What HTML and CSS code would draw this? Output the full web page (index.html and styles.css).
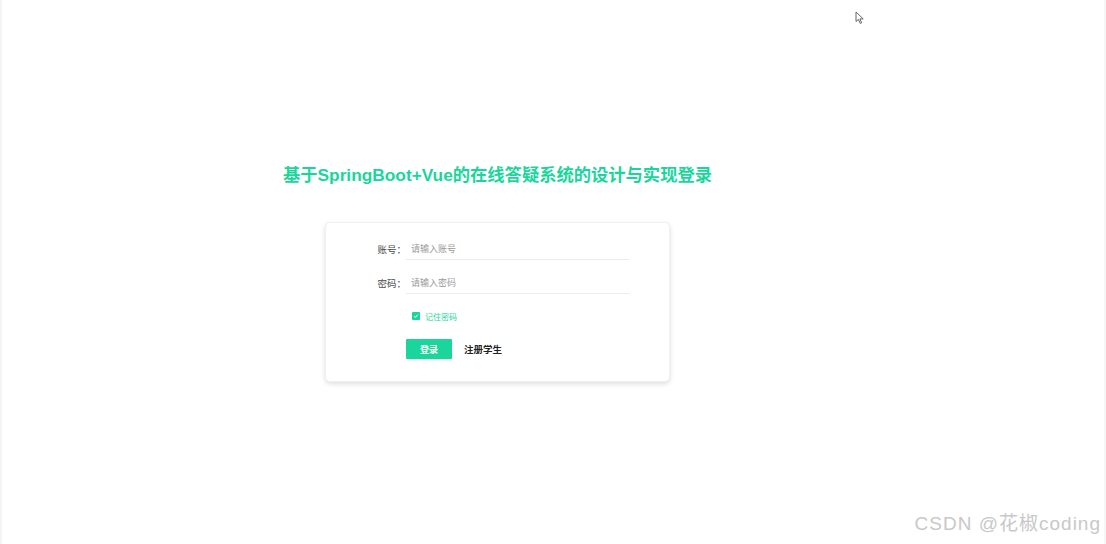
FILE: index.html
```html
<!DOCTYPE html>
<html>
<head>
    <meta charset="utf-8">
    <title>登录</title>
    <link rel="stylesheet" href="styles.css">
</head>
<body>
    <div class="page">
        <h1 class="title">基于SpringBoot+Vue的在线答疑系统的设计与实现登录</h1>

        <div class="login-card">
            <div class="form-item">
                <label class="form-label" for="username">账号：</label>
                <input class="form-input" type="text" id="username" placeholder="请输入账号">
            </div>

            <div class="form-item">
                <label class="form-label" for="password">密码：</label>
                <input class="form-input" type="password" id="password" placeholder="请输入密码">
            </div>

            <div class="form-item remember-row">
                <label class="remember">
                    <span class="check-box">
                        <svg width="6" height="6" viewBox="0 0 10 10"><path d="M2 5.2 L4.2 7.3 L8 2.8" fill="none" stroke="#fff" stroke-width="1.6"/></svg>
                    </span>
                    <span>记住密码</span>
                </label>
            </div>

            <div class="form-item button-row">
                <button class="login-button">登录</button>
                <a class="register-link">注册学生</a>
            </div>
        </div>
    </div>

    <svg class="cursor" width="10" height="14" viewBox="0 0 10 14">
        <path d="M1 1 L1 10.5 L3.4 8.4 L5.2 12.4 L6.6 11.8 L4.9 7.9 L8.2 7.9 Z" fill="#fff" stroke="#555" stroke-width="0.9"/>
    </svg>

    <div class="watermark">CSDN @花椒coding</div>
</body>
</html>
```

FILE: styles.css
```css
body {
    margin: 0;
    height: 544px;
    background: #fff;
    font-family: "Liberation Sans", "Noto Sans CJK SC", sans-serif;
    border-left: 2px solid #f4f4f4;
    border-right: 2px solid #f6f6f6;
    box-sizing: border-box;
    overflow: hidden;
}
.page {
    width: 991px;
    display: flex;
    flex-direction: column;
    align-items: center;
    padding-top: 163px;
}
.title {
    margin: 0;
    font-size: 17.3px;
    line-height: 24px;
    font-weight: bold;
    color: #1bd69c;
}
.login-card {
    margin-top: 35px;
    width: 345px;
    box-sizing: border-box;
    padding: 15px 40px 22px 0;
    background: #fff;
    border: 1px solid #f0f0f0;
    border-radius: 5px;
    box-shadow: 0 2px 5px rgba(0, 0, 0, 0.13);
}
.form-item {
    display: flex;
    align-items: center;
}
.form-item + .form-item {
    margin-top: 12px;
}
.form-label {
    width: 80px;
    box-sizing: border-box;
    text-align: right;
    font-size: 9.5px;
    color: #4a4a4a;
}
.form-input {
    flex: 1;
    height: 22px;
    box-sizing: border-box;
    padding: 0 0 0 5px;
    border: none;
    border-bottom: 1px solid #ececec;
    outline: none;
    font-size: 9px;
    font-family: inherit;
    color: #606266;
}
.form-input::placeholder {
    color: #9a9a9a;
}
.remember-row {
    margin-top: 15px !important;
    padding-left: 86px;
    height: 14px;
}
.remember {
    display: flex;
    align-items: center;
    gap: 5px;
    font-size: 8px;
    color: #1bd69c;
}
.check-box {
    width: 8px;
    height: 8px;
    border-radius: 1px;
    background: #1bd69c;
    display: flex;
    align-items: center;
    justify-content: center;
}
.button-row {
    margin-top: 16px !important;
    padding-left: 80px;
}
.login-button {
    width: 46px;
    height: 20px;
    padding: 0;
    border: none;
    border-radius: 1px;
    background: #1bd69c;
    color: #fff;
    font-size: 9px;
    font-weight: bold;
    font-family: inherit;
    cursor: pointer;
}
.register-link {
    margin-left: 12px;
    font-size: 9.5px;
    font-weight: bold;
    color: #222;
}
.cursor {
    position: absolute;
    left: 855px;
    top: 11px;
}
.watermark {
    position: absolute;
    right: 5px;
    bottom: 9px;
    font-size: 19px;
    letter-spacing: 1px;
    color: #c8c8c8;
}
```
